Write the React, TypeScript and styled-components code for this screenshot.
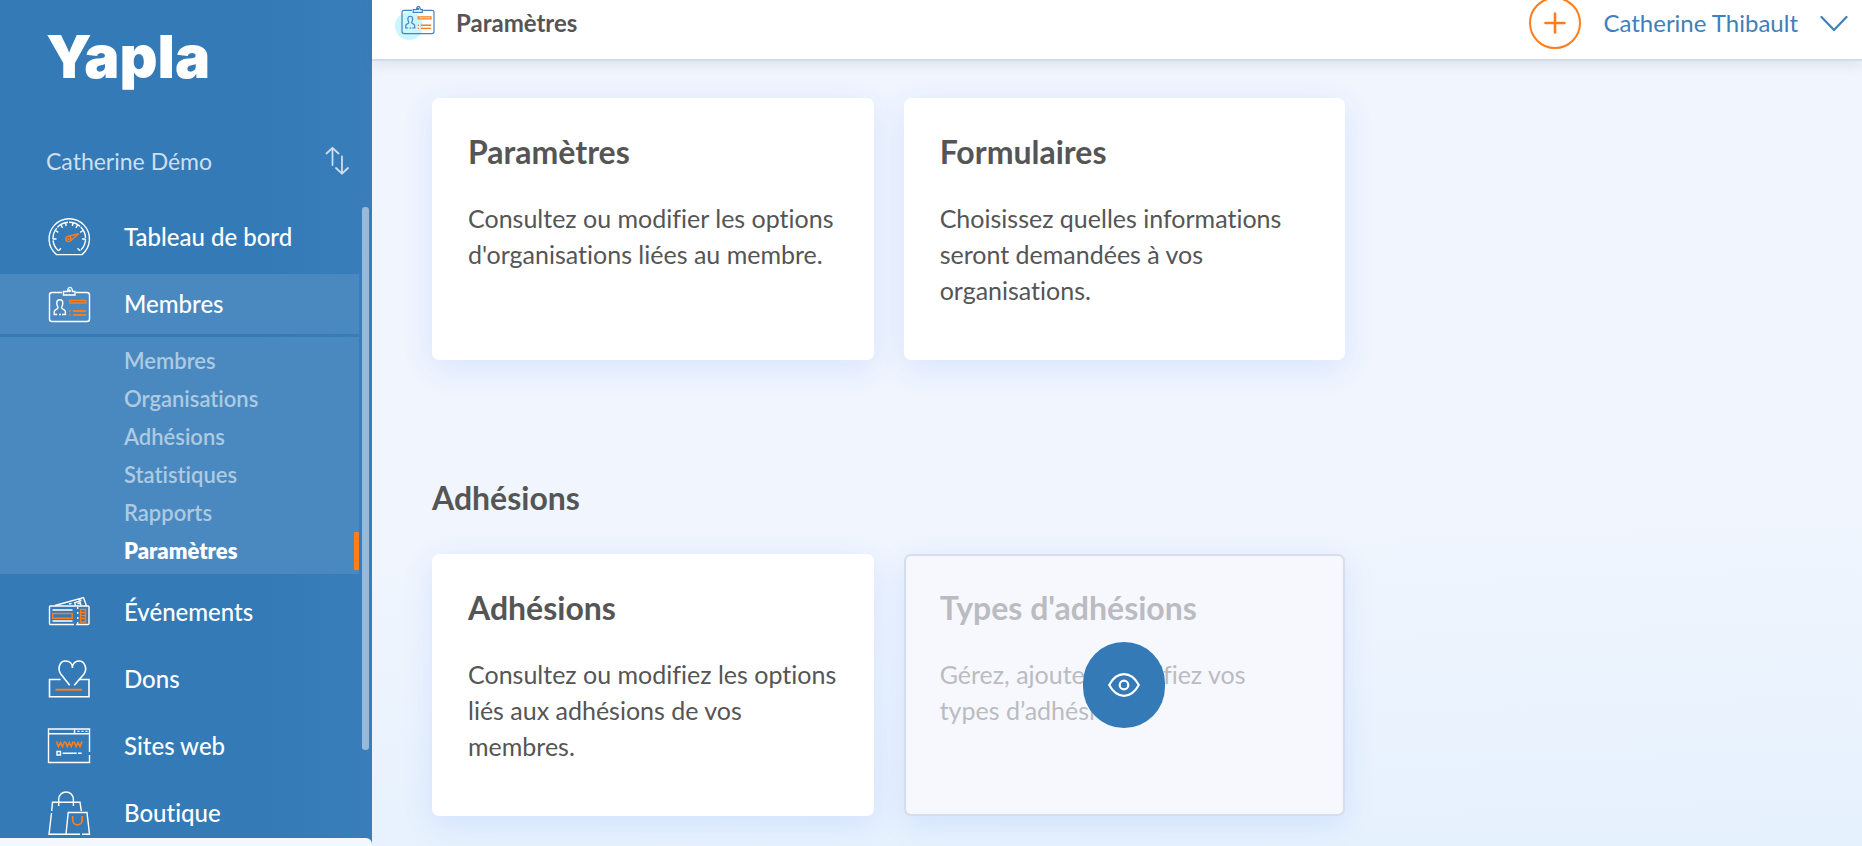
import React from "react";
import styled, { createGlobalStyle } from "styled-components";

const blue = "#337ab7";
const orange = "#ff7d1a";
const ink = "#555555";

const GlobalStyle = createGlobalStyle`
  *, *::before, *::after { box-sizing: border-box; }
  body {
    margin: 0;
    font-family: Lato, "Open Sans", sans-serif;
    font-variant-ligatures: none;
    color: ${ink};
    background: #f0f5fe;
  }
  h1, h2, h3, p, ul { margin: 0; padding: 0; }
  ul { list-style: none; }
  a { color: inherit; text-decoration: none; }
  button { font: inherit; color: inherit; background: none; border: 0; padding: 0; cursor: pointer; }
  svg { display: block; flex: none; }
`;

/* ---------- layout ---------- */

const Shell = styled.div`
  display: flex;
  height: 100vh;
  overflow: hidden;
`;

const Sidebar = styled.aside`
  display: flex;
  flex-direction: column;
  flex: none;
  width: 372px;
  padding-top: 27px;
  color: #fff;
  background: linear-gradient(90deg, ${blue} 70%, #397ebb 100%);
`;

const Content = styled.div`
  display: flex;
  flex-direction: column;
  flex: 1;
  min-width: 0;
`;

/* ---------- sidebar ---------- */

const Logo = styled.a`
  margin-left: 46px;
  font-family: Inter, sans-serif;
  font-size: 59px;
  font-weight: 900;
  line-height: 60px;
`;

const OrgSwitch = styled.button`
  display: flex;
  align-items: center;
  justify-content: space-between;
  height: 44px;
  margin: 52px 23px 24px 46px;
  font-size: 23px;
  color: #cfdfed;
`;

const NavArea = styled.div`
  display: flex;
  flex: 1;
  min-height: 0;
  gap: 3px;
  padding-right: 3px;
  overflow: hidden;
`;

const Nav = styled.nav`
  flex: 1;
  overflow: hidden;
`;

const NavList = styled.ul`
  display: flex;
  flex-direction: column;
  gap: 7px;
`;

const NavLink = styled.a<{ $active?: boolean }>`
  display: flex;
  align-items: center;
  gap: 31px;
  height: 60px;
  padding-left: 47px;
  font-size: 24px;
  font-weight: 500;
  line-height: 30px;
  background: ${(p) => (p.$active ? "#4a89bf" : "transparent")};
`;

const SubList = styled.ul`
  margin: 3px 0 1px;
  padding: 5px 0 4px;
  background: #4a89bf;
`;

const SubLink = styled.a<{ $current?: boolean }>`
  display: block;
  padding-left: 124px;
  border-right: 5px solid ${(p) => (p.$current ? orange : "transparent")};
  font-size: 22px;
  font-weight: ${(p) => (p.$current ? 800 : 600)};
  line-height: 38px;
  color: ${(p) => (p.$current ? "#fff" : "#adcae2")};
`;

const ScrollThumb = styled.div`
  flex: none;
  width: 7px;
  height: 86%;
  border-radius: 3px;
  background: #97b9da;
`;

const BottomStrip = styled.div`
  flex: none;
  height: 8px;
  border-top-right-radius: 6px;
  background: #f3f7fe;
`;

/* ---------- header ---------- */

const Header = styled.header`
  position: relative;
  display: flex;
  align-items: center;
  flex: none;
  height: 74px;
  margin-top: -13px;
  padding: 0 14px 0 23px;
  background: #fff;
  border-bottom: 2px solid #d3dce9;
  box-shadow: 0 4px 12px rgba(60, 80, 120, 0.1);
`;

const PageTitle = styled.h1`
  flex: 1;
  margin-left: 19px;
  font-size: 24px;
  font-weight: 700;
  line-height: 30px;
`;

const AddButton = styled.button`
  display: grid;
  place-items: center;
  width: 52px;
  height: 52px;
  border: 2px solid ${orange};
  border-radius: 50%;
  color: ${orange};
`;

const UserButton = styled.button`
  display: flex;
  align-items: center;
  gap: 22px;
  margin-left: 22px;
  font-size: 24px;
  line-height: 30px;
  color: #3f80ba;
`;

/* ---------- cards ---------- */

const Main = styled.main`
  flex: 1;
  min-height: 0;
  overflow: hidden;
  padding: 37px 45px 0 60px;
  background: linear-gradient(178deg, #f0f5fe 60%, #e5f1fd 100%);
`;

const SectionTitle = styled.h2`
  margin: 120px 0 38px;
  font-size: 32px;
  font-weight: 700;
  line-height: 36px;
`;

const CardGrid = styled.div`
  display: grid;
  grid-template-columns: repeat(3, 1fr);
  gap: 30px;
`;

const CardBox = styled.article<{ $muted?: boolean }>`
  position: relative;
  min-height: 262px;
  padding: ${(p) => (p.$muted ? "34px" : "36px")};
  border: ${(p) => (p.$muted ? "2px solid #d5deea" : "0")};
  border-radius: 7px;
  background: ${(p) => (p.$muted ? "#f6f8fe" : "#fff")};
  color: ${(p) => (p.$muted ? "#babcc1" : ink)};
  box-shadow: 0 8px 30px rgba(60, 125, 255, 0.13);
`;

const CardTitle = styled.h3`
  margin-bottom: 30px;
  font-size: 32px;
  font-weight: 700;
  line-height: 36px;
`;

const CardText = styled.p`
  font-size: 25px;
  line-height: 36px;
`;

const Overlay = styled.div`
  position: absolute;
  inset: 0;
  display: grid;
  place-items: center;
`;

const ViewButton = styled.button`
  display: grid;
  place-items: center;
  width: 82px;
  height: 86px;
  border-radius: 41px;
  color: #fff;
  background: ${blue};
`;

/* ---------- icons ---------- */

const Icon = ({ children }: { children: React.ReactNode }) => (
  <svg width="46" height="44" viewBox="0 0 46 44" fill="none" stroke="currentColor" strokeWidth="1.4" aria-hidden="true">
    {children}
  </svg>
);

const BadgeShapes = () => (
  <>
    <path d="M15 10.5H5a2.5 2.5 0 0 0-2.500 2.500V37a2.500 2.500 0 0 0 2.500 2.500H40a2.500 2.500 0 0 0 2.500-2.500V13a2.500 2.500 0 0 0-2.500-2.500H29" />
    <path d="M16.500 9.500h4c.5-5.500 4.500-5.500 5 0h2.500v3.500H16.500z" />
    <circle cx="22.500" cy="8.700" r=".8" />
    <path d="M12.800 17.800c-2 0-3 1.500-3 3.500s1 3 1.200 4.500c0 1.200-3.800 1.500-3.800 4v2.700h3M15 32.500h3.400v-2.700c0-2.500-3.800-2.800-3.800-4 .2-1.500 1.200-2.500 1.200-4.500s-1-3.500-3-3.500" />
    <path d="M12 32.500h2" />
    <g stroke={orange}>
      <path d="M22.700 18.500h16v2.500h-16z" />
      <path d="M26 29h13M26 33h13" strokeWidth="1.800" />
      <path d="M22.300 29h1.400M22.300 33h1.400" strokeWidth="1.800" />
    </g>
  </>
);

const DashboardIcon = () => (
  <Icon>
    <path d="M9.500 39.600A20.200 20.200 0 1 1 35 39.600z" />
    <path d="M11.500 35.800A16.300 16.300 0 1 1 33 35.800" strokeDasharray="12 1" />
    <path d="M11.500 35.800l2.500-2.500M33 35.800l-2.500-2.500M6 24h3.500M38.500 24H35M8.500 15.500l2.800 1.800M36 15.500l-2.800 1.800M14 10l1.600 2.800M30.500 10l-1.600 2.800M18.600 8l.6 3M26 8l-.6 3" />
    <g stroke={orange}>
      <circle cx="21.500" cy="24" r="2.600" />
      <circle cx="21.500" cy="24" r=".5" />
      <path d="M20.500 21.500L31.800 18.800l-8.300 7" />
    </g>
  </Icon>
);

const BadgeIcon = () => (
  <Icon>
    <BadgeShapes />
  </Icon>
);

const TicketIcon = () => (
  <Icon>
    <path d="M27 34.500H3.500a1 1 0 0 1-1-1V17a1 1 0 0 1 1-1H41a1 1 0 0 1 1 1v16.500a1 1 0 0 1-1 1H29" />
    <path d="M8 15.500L36.500 7.500 39.500 16" />
    <path d="M22 14l2.500-.7M31 9.500l3.500 1M28.500 15.500l-.8-2.800 5-1.500 1.300 4.300M30.500 13.800l2-.5" />
    <path d="M5.500 20h20M5.500 31h20" />
    <path d="M30.700 17v17" strokeDasharray="2 3" />
    <g stroke={orange}>
      <path d="M5.700 23.500h19.500v4.800H5.700z" />
      <path d="M33.500 19.500h5v12.500h-5zM33.500 22.500h5M33.500 25.500h5M33.500 28.500h5" />
    </g>
  </Icon>
);

const DonationIcon = () => (
  <Icon>
    <path d="M13.500 22.500H2.500V39.700H42V22.500H31.500" strokeWidth="1.600" />
    <path d="M22.700 28.200L13.800 17C10.500 12.500 12 4 18.500 4c4.500 0 7 3 7 7V8.500C27 5.500 29 4 32 4c6 0 8.500 8 5 13L27.300 28.200" strokeWidth="1.600" />
    <path d="M8.500 32.700H35" stroke={orange} strokeWidth="2" />
  </Icon>
);

const WebsiteIcon = () => (
  <Icon>
    <path d="M42.500 28V5h-41v33.500h41V31M1.500 9.700h41M27.500 5v4.700" />
    <path d="M30.500 7.400h2M34.500 7.400h2M38.500 7.400h2M10 27.500h3.500V31H10zM15.700 29.200h14M31 29.200h3.700" />
    <path
      d="M9.500 17.500l2 5 2-4 2 4 2-5M18.300 17.500l2 5 2-4 2 4 2-5M27 17.500l2 5 2-4 2 4 2-5"
      stroke={orange}
      strokeWidth="1.600"
    />
  </Icon>
);

const ShopIcon = () => (
  <Icon>
    <path d="M4.700 20L5.500 11.300H33l1.300 8.700M4.500 22L2 43.300h31M11.700 15V8.500c0-10 14.700-10 14.700 0V15" />
    <path d="M35 43.300h7.500L40 21.500H21.200L19 43.300" />
    <path d="M25.700 25v4c0 6.500 9.500 6.500 9.500 0v-4" stroke={orange} strokeWidth="1.700" />
  </Icon>
);

const PageIcon = () => (
  <svg width="42" height="40" viewBox="0 0 42 40" fill="none" aria-hidden="true">
    <circle cx="14" cy="23" r="14" fill="#ccf6ff" />
    <g transform="translate(5 -1) scale(.8)" stroke="#4285c0" strokeWidth="1.500">
      <BadgeShapes />
    </g>
  </svg>
);

const SwapIcon = () => (
  <svg width="24" height="30" viewBox="0 0 24 30" fill="none" stroke="currentColor" strokeWidth="1.800" strokeLinecap="round" strokeLinejoin="round" aria-hidden="true">
    <path d="M7.500 19V1.800M1.500 7.500l6-5.700 6 5.700M17 10.500v17.200M11 22l6 5.700 6-5.700" />
  </svg>
);

const PlusIcon = () => (
  <svg width="22" height="22" viewBox="0 0 22 22" stroke="currentColor" strokeWidth="2.600" strokeLinecap="round" aria-hidden="true">
    <path d="M11 1.500v19M1.500 11h19" />
  </svg>
);

const ChevronIcon = () => (
  <svg width="28" height="16" viewBox="0 0 28 16" fill="none" stroke="currentColor" strokeWidth="2.200" strokeLinecap="round" strokeLinejoin="round" aria-hidden="true">
    <path d="M1.500 2L14 15 26.500 2" />
  </svg>
);

const EyeIcon = () => (
  <svg width="32" height="24" viewBox="0 0 32 24" fill="none" stroke="currentColor" strokeWidth="2.200" strokeLinejoin="round" aria-hidden="true">
    <path d="M1.200 12C5 5 10.500 1.200 16 1.200s11 3.800 14.800 10.800c-3.800 7-9.300 10.800-14.800 10.800S5 19 1.200 12z" />
    <circle cx="16" cy="12" r="4.300" />
  </svg>
);

/* ---------- page ---------- */

const subPages = ["Membres", "Organisations", "Adhésions", "Statistiques", "Rapports", "Paramètres"];

const navItems = [
  { label: "Tableau de bord", icon: <DashboardIcon /> },
  { label: "Membres", icon: <BadgeIcon />, pages: subPages },
  { label: "Événements", icon: <TicketIcon /> },
  { label: "Dons", icon: <DonationIcon /> },
  { label: "Sites web", icon: <WebsiteIcon /> },
  { label: "Boutique", icon: <ShopIcon /> },
];

interface CardProps {
  title: string;
  text: string;
  hidden?: boolean;
}

const Card = ({ title, text, hidden }: CardProps) => (
  <CardBox $muted={hidden}>
    <CardTitle>{title}</CardTitle>
    <CardText>{text}</CardText>
    {hidden && (
      <Overlay>
        <ViewButton type="button" aria-label="Afficher">
          <EyeIcon />
        </ViewButton>
      </Overlay>
    )}
  </CardBox>
);

export default function App() {
  return (
    <Shell>
      <GlobalStyle />
      <Sidebar>
        <Logo href="#">Yapla</Logo>
        <OrgSwitch type="button">
          Catherine Démo
          <SwapIcon />
        </OrgSwitch>
        <NavArea>
          <Nav>
            <NavList>
              {navItems.map(({ label, icon, pages }) => (
                <li key={label}>
                  <NavLink href="#" $active={!!pages}>
                    {icon}
                    {label}
                  </NavLink>
                  {pages && (
                    <SubList>
                      {pages.map((page) => (
                        <li key={page}>
                          <SubLink href="#" $current={page === "Paramètres"}>
                            {page}
                          </SubLink>
                        </li>
                      ))}
                    </SubList>
                  )}
                </li>
              ))}
            </NavList>
          </Nav>
          <ScrollThumb />
        </NavArea>
        <BottomStrip />
      </Sidebar>
      <Content>
        <Header>
          <PageIcon />
          <PageTitle>Paramètres</PageTitle>
          <AddButton type="button" aria-label="Ajouter">
            <PlusIcon />
          </AddButton>
          <UserButton type="button">
            Catherine Thibault
            <ChevronIcon />
          </UserButton>
        </Header>
        <Main>
          <CardGrid>
            <Card title="Paramètres" text="Consultez ou modifier les options d'organisations liées au membre." />
            <Card title="Formulaires" text="Choisissez quelles informations seront demandées à vos organisations." />
          </CardGrid>
          <SectionTitle>Adhésions</SectionTitle>
          <CardGrid>
            <Card title="Adhésions" text="Consultez ou modifiez les options liés aux adhésions de vos membres." />
            <Card title="Types d'adhésions" text="Gérez, ajoutez, modifiez vos types d’adhésions." hidden />
          </CardGrid>
        </Main>
      </Content>
    </Shell>
  );
}
